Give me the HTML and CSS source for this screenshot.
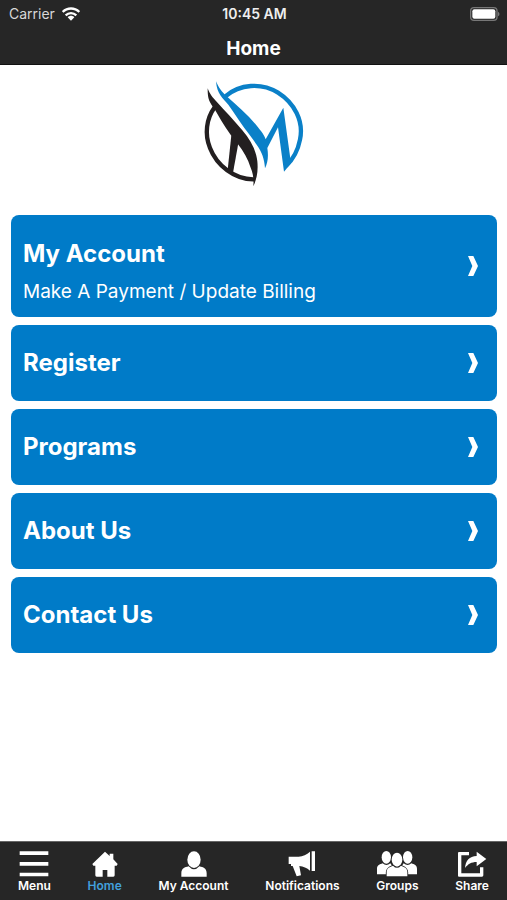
FILE: index.html
```html
<!DOCTYPE html>
<html lang="en">
<head>
<meta charset="utf-8">
<meta name="viewport" content="width=device-width, initial-scale=1">
<title>Home</title>
<link rel="stylesheet" href="styles.css">
</head>
<body>
<div class="app">
  <header class="top">
    <div class="status">
      <span class="carrier">Carrier
        <svg class="wifi" viewBox="0 0 54 42" aria-hidden="true">
          <g fill="none" stroke="#fff" stroke-width="7">
            <path d="M2 15C16 1 38 1 52 15"/>
            <path d="M11 25C20 16 34 16 43 25"/>
          </g>
          <path fill="#fff" d="M17 31C22 25 32 25 37 31L27 41Z"/>
        </svg>
      </span>
      <time class="clock">10:45 AM</time>
      <svg class="battery" viewBox="0 0 90 42" aria-hidden="true">
        <rect x="2" y="2" width="79" height="38" rx="10" fill="#262626" stroke="#777" stroke-width="4"/>
        <rect x="7" y="7" width="69" height="28" rx="6" fill="#fff"/>
        <path d="M84 14C90 17 90 25 84 28Z" fill="#777"/>
      </svg>
    </div>
    <h1 class="title">Home</h1>
  </header>

  <main class="content">
    <svg class="logo" viewBox="0 0 360 360" role="img" aria-label="Logo">
      <path fill="none" stroke="#0a80c8" stroke-width="13" d="M94 67C137 30 202 25 252 56C301 87 330 141 318 197C311 233 298 256 276 276"/>
      <path fill="#0a80c8" d="M66 22C75 43 84 54 98 67C126 92 160 121 186 152C203 173 211 183 215 196L268 101L291 268L270 293L252 160L220 222C224 248 221 267 213 283C211 255 204 234 188 212C177 196 163 178 151 162C136 140 120 116 103 92C86 72 69 61 66 22Z"/>
      <path fill="none" stroke="#231f20" stroke-width="13" d="M62 100C37 134 31 181 48 222C68 274 121 317 180 316"/>
      <path fill="#231f20" d="M41 43C48 62 57 72 68 83C91 109 121 139 145 169C170 199 187 230 190 262C193 292 188 316 178 337C180 314 177 297 170 281C162 256 148 231 132 211C113 190 97 164 83 142C75 129 66 111 57 99C42 80 41 65 41 43Z"/>
      <path fill="#231f20" d="M112 184L133 208L117 296L101 288Z"/>
    </svg>

    <nav class="links" aria-label="Sections">
      <a class="card card-tall" href="#account">
        <span class="card-text"><strong class="card-title">My Account</strong><span class="card-note">Make A Payment / Update Billing</span></span>
        <svg class="chevron" viewBox="0 0 30 60" aria-hidden="true"><path d="M0 0H16L30 30L16 60H0L13 30Z"/></svg>
      </a>
      <a class="card" href="#register">
        <strong class="card-title">Register</strong>
        <svg class="chevron" viewBox="0 0 30 60" aria-hidden="true"><path d="M0 0H16L30 30L16 60H0L13 30Z"/></svg>
      </a>
      <a class="card" href="#programs">
        <strong class="card-title">Programs</strong>
        <svg class="chevron" viewBox="0 0 30 60" aria-hidden="true"><path d="M0 0H16L30 30L16 60H0L13 30Z"/></svg>
      </a>
      <a class="card" href="#about">
        <strong class="card-title">About Us</strong>
        <svg class="chevron" viewBox="0 0 30 60" aria-hidden="true"><path d="M0 0H16L30 30L16 60H0L13 30Z"/></svg>
      </a>
      <a class="card" href="#contact">
        <strong class="card-title">Contact Us</strong>
        <svg class="chevron" viewBox="0 0 30 60" aria-hidden="true"><path d="M0 0H16L30 30L16 60H0L13 30Z"/></svg>
      </a>
    </nav>
  </main>

  <nav class="tabs" aria-label="Main">
    <button class="tab" type="button">
      <svg class="icon" viewBox="0 0 90 84" aria-hidden="true"><path d="M2 4H88V15H2ZM2 36H88V47H2ZM2 68H88V79H2Z"/></svg>
      <span>Menu</span>
    </button>
    <a class="tab tab-active" href="#home" aria-current="page">
      <svg class="icon" viewBox="0 0 90 84" aria-hidden="true"><path d="M45 5L59 18V11H70V28L83 42L80 47H74V76Q74 80 70 80H52V60H38V80H20Q16 80 16 76V47H10L7 42Z"/></svg>
      <span>Home</span>
    </a>
    <a class="tab" href="#account">
      <svg class="icon" viewBox="0 0 90 84" aria-hidden="true"><ellipse cx="45" cy="29" rx="20" ry="25"/><path d="M7 80V70C7 55 17 52 29 49Q45 67 61 49C73 52 83 55 83 70V80Z"/></svg>
      <span>My Account</span>
    </a>
    <a class="tab" href="#notifications">
      <svg class="icon" viewBox="0 0 90 84" aria-hidden="true"><path d="M5 20H35Q54 18 69 5V62Q55 50 37 48L42 76L29 79L17 48H12V42H5ZM74 4H84V63H74Z"/></svg>
      <span>Notifications</span>
    </a>
    <a class="tab" href="#groups">
      <svg class="icon icon-wide" viewBox="0 0 126 84" aria-hidden="true">
        <ellipse cx="31" cy="22" rx="14" ry="19"/><ellipse cx="95" cy="22" rx="14" ry="19"/>
        <path d="M3 73V56C3 46 11 43 20 40Q31 50 43 40L49 49L36 73ZM123 73V56C123 46 115 43 106 40Q95 50 83 40L77 49L90 73Z"/>
        <g class="front"><ellipse cx="63" cy="29" rx="16" ry="21"/><path d="M32 79V67C32 53 42 51 51 47Q63 60 75 47C84 51 94 53 94 67V79Z"/></g>
      </svg>
      <span>Groups</span>
    </a>
    <button class="tab" type="button">
      <svg class="icon" viewBox="0 0 90 84" aria-hidden="true"><path d="M36 6H6Q3 6 3 9V77Q3 80 6 80H75Q79 80 79 76V52H69V70H13V16H36Z"/><path d="M59 5L88 27L59 49V36C43 36 33 42 24 54C26 32 37 19 59 18Z"/></svg>
      <span>Share</span>
    </button>
  </nav>
</div>
</body>
</html>
```
FILE: styles.css
```css
* {
  box-sizing: border-box;
}

body {
  margin: 0;
  background: #fff;
  font-family: Inter, "Liberation Sans", sans-serif;
}

.app {
  display: flex;
  flex-direction: column;
  min-height: 100vh;
}

.top {
  background: #262626;
  color: #fff;
  border-bottom: 1px solid #111;
}

.status {
  display: grid;
  grid-template-columns: 1fr auto 1fr;
  align-items: center;
  height: 27px;
  padding: 0 7px 0 9px;
  font-size: 14px;
}

.carrier {
  display: flex;
  align-items: center;
  gap: 7px;
  color: #d8d8d8;
}

.wifi {
  width: 18px;
  height: 14px;
}

.clock {
  font-weight: 600;
  color: #eee;
}

.battery {
  justify-self: end;
  width: 30px;
  height: 14px;
}

.title {
  margin: 0;
  padding: 10px 0 3px;
  font-size: 19px;
  line-height: 24px;
  font-weight: 700;
  text-align: center;
}

.content {
  flex: 1;
  padding: 9px 10px 24px 11px;
}

.logo {
  display: block;
  width: 120px;
  height: 120px;
  margin: 0 auto 21px;
}

.links {
  display: flex;
  flex-direction: column;
  gap: 8px;
}

.card {
  display: flex;
  align-items: center;
  justify-content: space-between;
  min-height: 76px;
  padding: 0 19px 0 12px;
  border-radius: 8px;
  background: #007bc8;
  color: #fff;
  text-decoration: none;
}

.card-tall {
  min-height: 102px;
}

.card-text {
  display: flex;
  flex-direction: column;
  gap: 8px;
  padding-top: 11px;
}

.card-title {
  font-size: 24px;
  line-height: 32px;
  font-weight: 700;
}

.card-note {
  font-size: 19px;
  line-height: 28px;
}

.chevron {
  width: 10px;
  height: 20px;
  fill: #fff;
}

.tabs {
  display: flex;
  justify-content: space-between;
  padding: 8px 18px 6px;
  border-top: 1px solid #666;
  background: #262626;
}

.tab {
  display: flex;
  flex-direction: column;
  align-items: center;
  padding: 0;
  border: 0;
  background: none;
  color: #fff;
  font: inherit;
  font-size: 12px;
  line-height: 16px;
  font-weight: 600;
  text-decoration: none;
}

.tab-active {
  color: #42a0dc;
}

.icon {
  width: 30px;
  height: 28px;
  fill: #fff;
}

.icon-wide {
  width: 42px;
}

.front {
  stroke: #262626;
  stroke-width: 5px;
  paint-order: stroke;
}
```
